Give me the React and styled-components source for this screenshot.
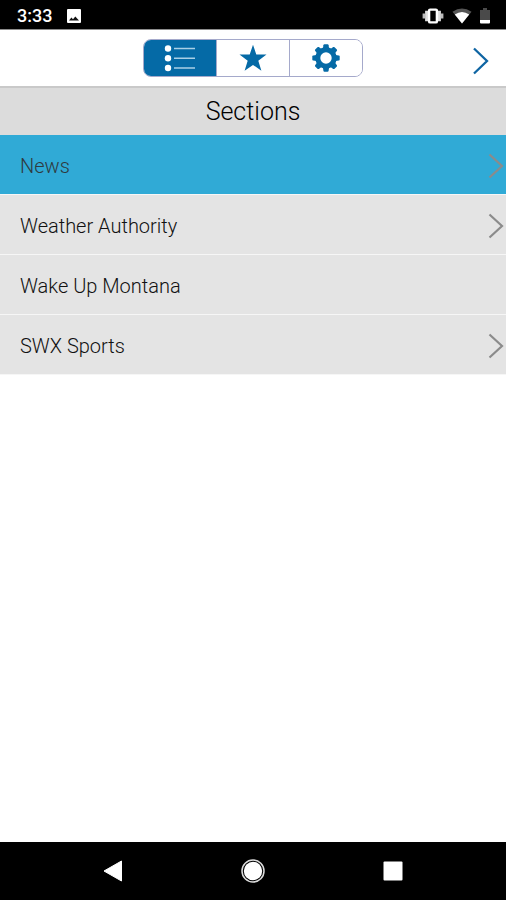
import React, { useState } from "react";
import styled, { createGlobalStyle } from "styled-components";

const sections = [
  { name: "News", hasChildren: true },
  { name: "Weather Authority", hasChildren: true },
  { name: "Wake Up Montana", hasChildren: false },
  { name: "SWX Sports", hasChildren: true },
];

const teeth = [0, 45, 90, 135, 180, 225, 270, 315];

function ListIcon() {
  return (
    <svg width="32" height="28" viewBox="0 0 32 28" aria-hidden="true">
      <g fill="#fff">
        <circle cx="4" cy="4.5" r="3.2" />
        <circle cx="4" cy="14.2" r="3.2" />
        <circle cx="4" cy="24" r="3.2" />
      </g>
      <path d="M10 4.5h21M10 14.2h21M10 24h21" stroke="#a9cfe6" strokeWidth="1.6" />
    </svg>
  );
}

function StarIcon() {
  return (
    <svg width="28" height="28" viewBox="0 0 28 28" aria-hidden="true">
      <path
        fill="#056aa6"
        d="M14 .8l3.3 9.6h10.2l-8.2 6.3 3.1 10.1L14 20.9l-8.4 5.9 3.1-10.1L.5 10.4h10.2z"
      />
    </svg>
  );
}

function GearIcon() {
  return (
    <svg width="28" height="28" viewBox="0 0 28 28" aria-hidden="true">
      <circle cx="14" cy="14" r="8.2" fill="none" stroke="#056aa6" strokeWidth="5" />
      {teeth.map((angle) => (
        <path
          key={angle}
          fill="#056aa6"
          d="M10.9 4.5l.5-3.300q.2-.9 1-.9h3.200q.8 0 1 .9l.5 3.300z"
          transform={`rotate(${angle} 14 14)`}
        />
      ))}
    </svg>
  );
}

function App() {
  const [tab, setTab] = useState("sections");
  const [selected, setSelected] = useState("News");

  const pick = (e, name) => {
    e.preventDefault();
    setSelected(name);
  };

  return (
    <>
      <GlobalStyle />
      <Screen>
        <StatusBar>
          <StatusGroup $gap="15px">
            <Time>3:33</Time>
            <svg width="14" height="14" viewBox="0 0 14 14" aria-hidden="true">
              <rect width="14" height="14" rx="1" fill="#fff" />
              <path d="M2 11.6l2.4-3.2 1.6 1.8 2.3-2.8 3.7 4.2z" fill="#111" />
            </svg>
          </StatusGroup>
          <StatusGroup $gap="8px">
            <svg width="22" height="16" viewBox="0 0 22 16" aria-hidden="true">
              <path d="M4.600 2.800v10.400M17.400 2.800v10.400" stroke="#ddd" strokeWidth="3" />
              <path d="M1.800 5.500v5M20.200 5.500v5" stroke="#bbb" strokeWidth="2.4" />
              <rect x="7.1" y="1.6" width="7.8" height="12.8" rx="1" fill="#000" stroke="#fff" strokeWidth="2.4" />
            </svg>
            <svg width="20" height="16" viewBox="0 0 20 16" aria-hidden="true">
              <path d="M.5 3.8Q10-3 19.5 3.8L10 15.5z" fill="#555" />
              <path d="M2.8 6.6Q10 1.2 17.2 6.6L10 15.5z" fill="#fff" />
            </svg>
            <svg width="10" height="16" viewBox="0 0 10 16" aria-hidden="true">
              <path d="M0 2h3V0h4v2h3v10H0z" fill="#4a4a4a" />
              <path d="M0 12h10v2.500q0 1-1 1H1q-1 0-1-1z" fill="#fff" />
            </svg>
          </StatusGroup>
        </StatusBar>

        <Toolbar>
          <Segments>
            <Segment
              aria-label="Sections"
              $active={tab === "sections"}
              onClick={() => setTab("sections")}
            >
              <ListIcon />
            </Segment>
            <Segment aria-label="Favorites" onClick={() => setTab("favorites")}>
              <StarIcon />
            </Segment>
            <Segment aria-label="Settings" onClick={() => setTab("settings")}>
              <GearIcon />
            </Segment>
          </Segments>
          <NextButton aria-label="Close menu">
            <svg width="16" height="28" viewBox="0 0 16 28" aria-hidden="true">
              <path d="M1 1.500L14 14 1 26.500" fill="none" stroke="#0f65a3" strokeWidth="2.3" />
            </svg>
          </NextButton>
        </Toolbar>

        <Title>Sections</Title>

        <SectionList>
          {sections.map(({ name, hasChildren }) => (
            <SectionItem key={name}>
              <SectionLink
                href="#"
                $selected={selected === name}
                onClick={(e) => pick(e, name)}
              >
                {name}
                {hasChildren && (
                  <svg width="16" height="26" viewBox="0 0 16 26" aria-hidden="true">
                    <path d="M1.500 1.500L14 13 1.500 24.500" fill="none" stroke="#8b8b8b" strokeWidth="2.2" />
                  </svg>
                )}
              </SectionLink>
            </SectionItem>
          ))}
        </SectionList>

        <NavBar>
          <NavButton aria-label="Back">
            <svg width="22" height="24" viewBox="0 0 22 24" aria-hidden="true">
              <path d="M2 12L19.500 2v20z" fill="#fff" stroke="#fff" strokeLinejoin="round" />
            </svg>
          </NavButton>
          <NavButton aria-label="Home">
            <svg width="24" height="24" viewBox="0 0 24 24" aria-hidden="true">
              <circle cx="12" cy="12" r="11" fill="none" stroke="#ddd" strokeWidth="1.5" />
              <circle cx="12" cy="12" r="9.2" fill="#fff" />
            </svg>
          </NavButton>
          <NavButton aria-label="Recent apps">
            <svg width="20" height="20" viewBox="0 0 20 20" aria-hidden="true">
              <rect x=".5" y=".5" width="19" height="19" rx="1" fill="#fff" />
            </svg>
          </NavButton>
        </NavBar>
      </Screen>
    </>
  );
}

export default App;

const GlobalStyle = createGlobalStyle`
  * {
    box-sizing: border-box;
  }

  body {
    margin: 0;
    background: #fff;
    font-family: Roboto, "Liberation Sans", sans-serif;
  }

  button {
    border: 0;
    padding: 0;
    background: none;
    cursor: pointer;
  }

  svg {
    display: block;
  }
`;

const Screen = styled.div`
  min-height: 100vh;
  display: flex;
  flex-direction: column;
`;

const StatusBar = styled.div`
  height: 30px;
  padding: 2px 16px 0 17px;
  display: flex;
  align-items: center;
  justify-content: space-between;
  background: #000;
  border-bottom: 1px solid #8c8c8c;
`;

const StatusGroup = styled.div`
  display: flex;
  align-items: center;
  gap: ${(props) => props.$gap};
`;

const Time = styled.span`
  color: #fff;
  font-size: 18px;
  font-weight: 500;
  line-height: 20px;
`;

const Toolbar = styled.header`
  height: 58px;
  padding: 0 17px;
  display: grid;
  grid-template-columns: 1fr auto 1fr;
  align-items: center;
  background: #fff;
  border-bottom: 2px solid #c9c9c9;
`;

const Segments = styled.div`
  grid-column: 2;
  display: flex;
  width: 220px;
  height: 38px;
  border: 1px solid #a5a9cb;
  border-radius: 8px;
  overflow: hidden;
`;

const Segment = styled.button`
  flex: 1;
  display: flex;
  align-items: center;
  justify-content: center;
  background: ${(props) => (props.$active ? "#056aa6" : "#fff")};

  & + & {
    border-left: 1px solid #a5a9cb;
  }
`;

const NextButton = styled.button`
  justify-self: end;
  padding-top: 5px;
`;

const Title = styled.h1`
  margin: 0;
  padding: 8px 0;
  background: #dcdcdc;
  color: #000;
  font-size: 25px;
  font-weight: 300;
  line-height: 31px;
  text-align: center;
`;

const SectionList = styled.ul`
  margin: 0;
  padding: 0;
  flex: 1;
  list-style: none;
`;

const SectionItem = styled.li`
  border-bottom: 1px solid #f6f6f6;
`;

const SectionLink = styled.a`
  height: 59px;
  padding: 2px 2px 0 20px;
  display: flex;
  align-items: center;
  justify-content: space-between;
  background: ${(props) => (props.$selected ? "#30aad6" : "#e4e4e4")};
  color: ${(props) => (props.$selected ? "#2f3a3f" : "#111")};
  font-size: 20px;
  font-weight: 300;
  line-height: 24px;
  text-decoration: none;
`;

const NavBar = styled.nav`
  height: 58px;
  padding: 0 43px;
  display: grid;
  grid-template-columns: repeat(3, 1fr);
  background: #000;
`;

const NavButton = styled.button`
  display: flex;
  align-items: center;
  justify-content: center;
`;
